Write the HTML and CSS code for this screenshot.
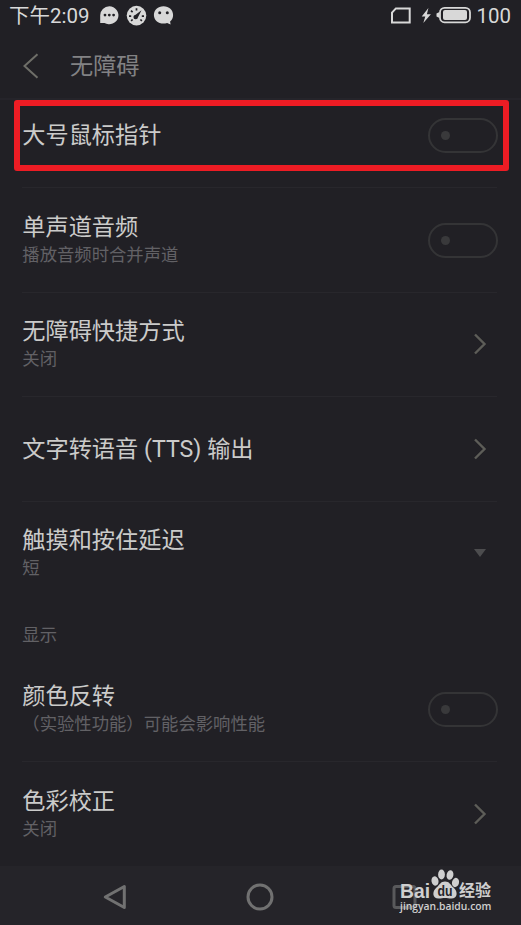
FILE: index.html
```html
<!DOCTYPE html>
<html lang="zh-CN">
<head>
<meta charset="utf-8">
<title>无障碍</title>
<link rel="stylesheet" href="styles.css">
</head>
<body>
<div class="phone">
  <div class="status">
    <span class="time">下午2:09</span>
    <svg class="notices" width="76" height="22" viewBox="0 0 76 22">
      <g fill="#d8d8d8">
        <path d="M10.300 1.300a9.300 9 0 1 1-4.800 16.800H1.200V10.300A9.300 9 0 0 1 10.300 1.300z"/>
        <circle cx="37.500" cy="10.600" r="9.800"/>
        <path d="M64.500 1.200c5.600 0 9.600 3.900 9.600 8.800 0 2.800-1.100 5-3 6.600l.5 3-3.500-1.500c-7 2-13.200-2-13.200-8.100 0-5 4-8.800 9.600-8.800z"/>
      </g>
      <g fill="#212025">
        <circle cx="6" cy="10.100" r="1.400"/><circle cx="10.300" cy="10.100" r="1.400"/><circle cx="14.600" cy="10.100" r="1.400"/>
        <circle cx="60.700" cy="7.800" r="1.500"/><circle cx="68.300" cy="7.800" r="1.500"/>
        <path d="M42.500 5.200l-3.500 7a2.300 2.300 0 1 1-2.400-2.500z"/>
      </g>
      <path d="M30 11.200h2.200M42.800 11.200h2.200M32 5.700l1.600 1.500M37.500 3.200v2.200M32.100 15.900l1.500-1.400M42.900 15.900l-1.500-1.400" stroke="#212025" stroke-width="1.700"/>
    </svg>
    <svg class="power" width="84" height="20" viewBox="0 0 84 20">
      <path d="M5.900 2.400H19.700V16.400H2V6.700z" fill="none" stroke="#d8d8d8" stroke-width="2"/>
      <path d="M38.400 2l-6.700 8.400h3.600l-2 6.600 7.600-8.700h-4z" fill="#d8d8d8"/>
      <rect x="50" y="1.900" width="30" height="14.400" rx="4.500" fill="none" stroke="#d8d8d8" stroke-width="1.800"/>
      <rect x="53" y="4.100" width="24" height="10" rx="2" fill="#d8d8d8"/>
      <path d="M49.500 6.100l-3 1.500v3l3 1.500z" fill="#d8d8d8"/>
    </svg>
    <span class="percent">100</span>
  </div>
  <header class="header">
    <svg class="back" width="16" height="26" viewBox="0 0 16 26"><path d="M14.500 1.300L1.500 13l13 11.700" fill="none" stroke="#6e6e68" stroke-width="2"/></svg>
    <h1>无障碍</h1>
  </header>
  <main class="list">
    <div class="row first">
      <div class="title">大号鼠标指针</div><span class="switch"></span>
      <div class="highlight"></div>
    </div>
    <div class="row">
      <div><div class="title">单声道音频</div><div class="sub">播放音频时合并声道</div></div><span class="switch"></span>
    </div>
    <div class="row">
      <div><div class="title">无障碍快捷方式</div><div class="sub">关闭</div></div>
      <svg class="chevron" width="14" height="22" viewBox="0 0 14 22"><path d="M2 1.500L11.500 11 2 20.500"/></svg>
    </div>
    <div class="row">
      <div class="title">文字转语音 (TTS) 输出</div>
      <svg class="chevron" width="14" height="22" viewBox="0 0 14 22"><path d="M2 1.500L11.500 11 2 20.500"/></svg>
    </div>
    <div class="row last">
      <div><div class="title">触摸和按住延迟</div><div class="sub">短</div></div>
      <span class="drop"></span>
    </div>
    <h2 class="section">显示</h2>
    <div class="row">
      <div><div class="title">颜色反转</div><div class="sub">（实验性功能）可能会影响性能</div></div><span class="switch"></span>
    </div>
    <div class="row last">
      <div><div class="title">色彩校正</div><div class="sub">关闭</div></div>
      <svg class="chevron" width="14" height="22" viewBox="0 0 14 22"><path d="M2 1.500L11.500 11 2 20.500"/></svg>
    </div>
  </main>
  <nav class="nav">
    <svg width="28" height="28" viewBox="0 0 28 28"><path d="M23.300 3.500V24.500L4.300 14z"/></svg>
    <svg width="28" height="28" viewBox="0 0 28 28"><circle cx="14" cy="14" r="12"/></svg>
    <svg width="28" height="28" viewBox="0 0 28 28"><rect x="3" y="3.500" width="21" height="21" rx="2"/></svg>
    <svg class="mark" width="96" height="54" viewBox="0 0 96 54">
      <g fill="#cfcfcf">
        <ellipse cx="36" cy="13" rx="3.500" ry="4.700" transform="rotate(-12 36 13)"/>
        <ellipse cx="42.500" cy="6.500" rx="3.400" ry="4.900"/>
        <ellipse cx="51" cy="7" rx="3.400" ry="4.900" transform="rotate(10 51 7)"/>
        <ellipse cx="56.500" cy="14.500" rx="3.500" ry="4.700" transform="rotate(15 56.500 14.500)"/>
        <path d="M46 13.500c4.500 0 5 3 8.500 6 5 4.500 3.800 11-2 11-3 0-4-.6-6.500-.6s-3.500.6-6.500.6c-5.800 0-7-6.500-2-11 3.500-3 4-6 8.500-6z"/>
      </g>
      <text class="bai" x="1" y="30" textLength="30" lengthAdjust="spacingAndGlyphs">Bai</text>
      <text class="du" x="38.500" y="28" textLength="15" lengthAdjust="spacingAndGlyphs">du</text>
      <text class="jy" x="60" y="28">经验</text>
      <text class="url" x="1" y="42" textLength="91.500" lengthAdjust="spacingAndGlyphs">jingyan.baidu.com</text>
    </svg>
  </nav>
</div>
</body>
</html>
```
FILE: styles.css
```css
* { box-sizing: border-box; }
body {
  margin: 0;
  background: #212025;
  font-family: Roboto, "Noto Sans CJK SC", sans-serif;
}
.phone {
  width: 521px;
  height: 925px;
  display: flex;
  flex-direction: column;
  overflow: hidden;
}
svg { display: block; flex: none; }
.status {
  height: 31px;
  flex: none;
  display: flex;
  align-items: center;
  padding: 0 10px 0 9px;
  color: #d8d8d8;
  font-size: 20.500px;
  line-height: 30px;
}
.time { width: 80px; white-space: nowrap; }
.notices { margin: 0 0 0 10px; }
.power { margin-left: auto; }
.percent { width: 35px; margin-left: 2px; text-align: right; }
.header {
  height: 69px;
  flex: none;
  display: flex;
  align-items: center;
  padding: 2px 0 0 23px;
  border-bottom: 2px solid #25242a;
}
.header h1 {
  margin: 0 0 0 31px;
  color: #828284;
  font-size: 23.200px;
  font-weight: 400;
  line-height: 30px;
}
.list { flex: none; margin-top: -16px; }
.row {
  position: relative;
  height: 104.400px;
  margin: 0 24px 0 22px;
  padding-left: .3px;
  display: flex;
  align-items: center;
  justify-content: space-between;
  border-bottom: 1px solid #28272c;
}
.row.first { padding-bottom: 1px; }
.row.last { border-bottom-color: transparent; }
.title {
  color: #cbcbca;
  font-size: 23.200px;
  line-height: 30px;
  white-space: nowrap;
}
.sub {
  color: #626165;
  font-size: 17.350px;
  line-height: 26px;
  white-space: nowrap;
}
.switch {
  width: 70px;
  height: 35px;
  margin-right: -1px;
  border: 2px solid #343436;
  border-radius: 18px;
  display: flex;
  align-items: center;
  padding-left: 11px;
}
.switch::before {
  content: "";
  width: 9px;
  height: 9px;
  border-radius: 50%;
  background: #39393b;
}
.highlight {
  position: absolute;
  left: -8px;
  top: 16px;
  width: 495px;
  height: 71px;
  border: 6px solid #ed1c24;
  border-radius: 3px;
}
.chevron { margin-right: 10px; fill: none; stroke: #5d5d58; stroke-width: 2.400; }
.drop {
  width: 0;
  height: 0;
  margin-right: 11px;
  border: 6.500px solid transparent;
  border-top: 8px solid #4c4c4e;
  border-bottom: 0;
}
.section {
  height: 51.600px;
  margin: 0 22.300px;
  padding-top: 16px;
  color: #626165;
  font-size: 17.350px;
  font-weight: 400;
  line-height: 26px;
}
.nav {
  position: relative;
  flex: 1;
  display: flex;
  align-items: center;
  gap: 117px;
  padding: 2px 0 0 101px;
  background: #252429;
}
.nav > svg { fill: none; stroke: #717171; stroke-width: 3; stroke-linejoin: round; }
.nav > svg:nth-child(3) { stroke: #59595b; }
.nav > .mark { position: absolute; left: 399px; top: 2px; stroke: none; }
.mark text { fill: #cfcfcf; }
.bai { font: 700 21px "Liberation Sans", sans-serif; }
.mark .du { font: 700 14px "Liberation Sans", sans-serif; fill: #252429; }
.jy { font: 700 16px "Noto Sans CJK SC", sans-serif; }
.url { font: 600 11px "Open Sans", sans-serif; }
```
